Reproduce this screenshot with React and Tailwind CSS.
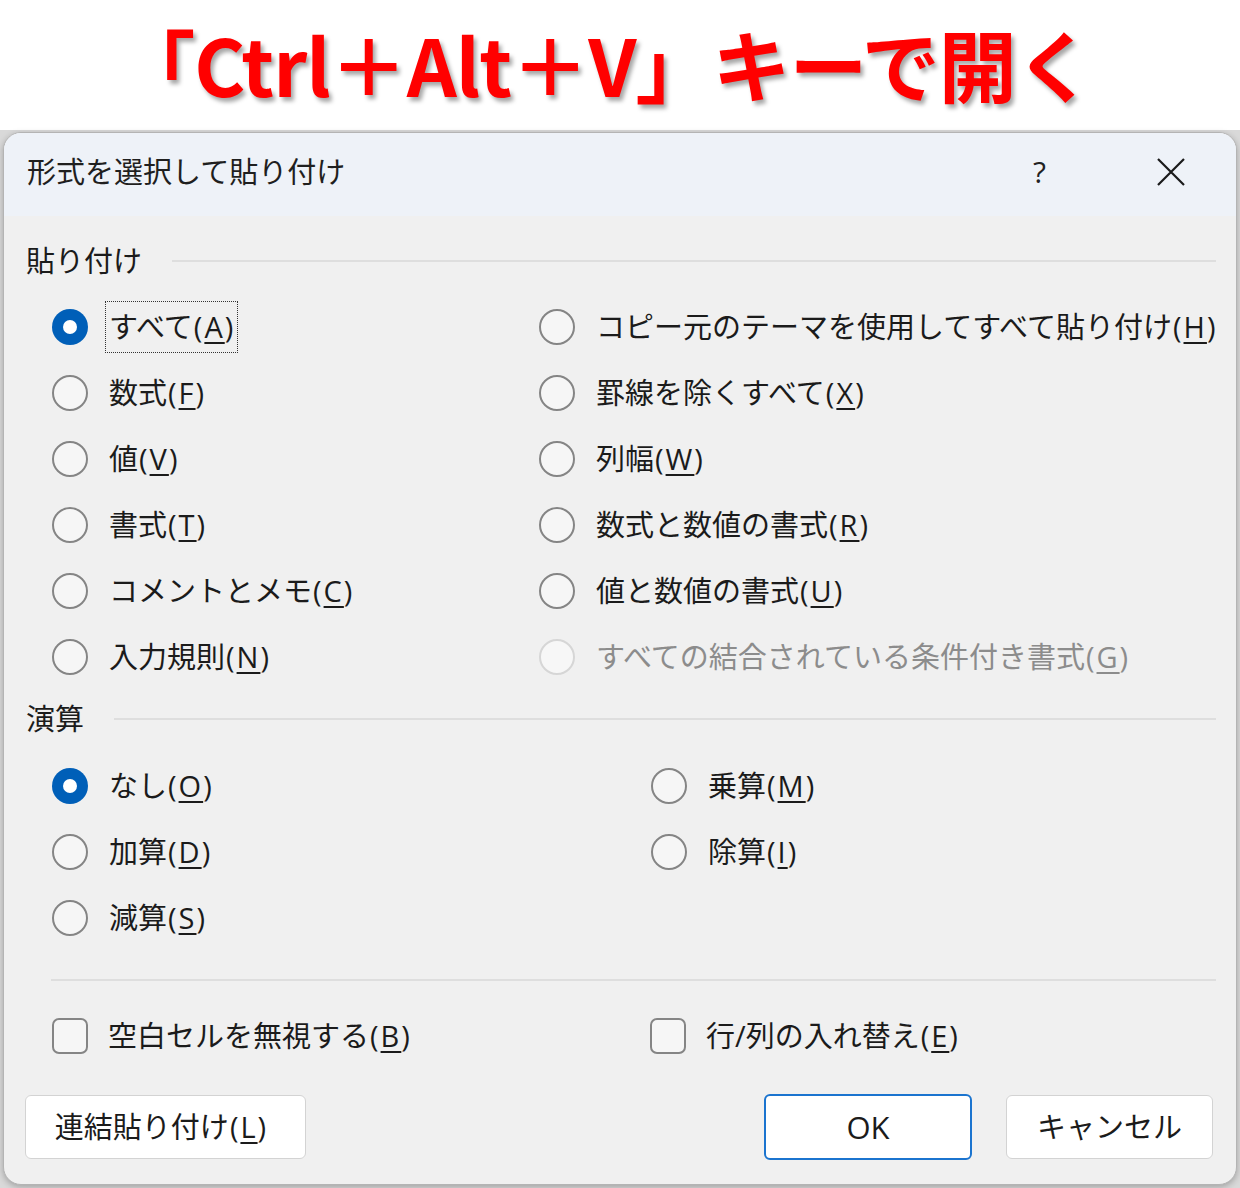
import React from 'react';

const font = { fontFamily: '"Noto Sans CJK JP", "Noto Sans", sans-serif' };
const uiFont = { fontFamily: '"Open Sans", "Noto Sans CJK JP", sans-serif' };

function Radio({ checked, disabled }) {
  if (checked) {
    return (
      <span className="w-[36px] h-[36px] rounded-full bg-[#005fb8] flex items-center justify-center shrink-0">
        <span className="w-[14px] h-[14px] rounded-full bg-white" />
      </span>
    );
  }
  return (
    <span
      className={`w-[36px] h-[36px] rounded-full border-2 shrink-0 ${
        disabled ? 'border-[#d6d6d6] bg-[#f7f7f7]' : 'border-[#858585] bg-[#f6f6f6]'
      }`}
    />
  );
}

function Key({ k }) {
  return (
    <span className="ml-[1px] tracking-[2px]">
      (<u className="underline-offset-[4px] decoration-[1.5px]">{k}</u>)
    </span>
  );
}

function Label({ text, keyChar, disabled }) {
  return (
    <span className={disabled ? 'text-[#8c8c8c]' : 'text-[#1b1b1b]'}>
      {text}
      <Key k={keyChar} />
    </span>
  );
}

function RadioRow({ text, keyChar, checked, disabled, focus }) {
  return (
    <div className="h-[66px] flex items-center">
      <Radio checked={checked} disabled={disabled} />
      {focus ? (
        <span className="ml-[17px] pl-[3px] pr-[2px] py-[3px] border border-dotted border-[#333] leading-[44px]">
          <Label text={text} keyChar={keyChar} disabled={disabled} />
        </span>
      ) : (
        <span className="ml-[21px]">
          <Label text={text} keyChar={keyChar} disabled={disabled} />
        </span>
      )}
    </div>
  );
}

function Section({ title, lineStart }) {
  return (
    <div className="h-[50px] flex items-center pl-[22px] pr-[20px]">
      <span className="text-[29px] text-[#1b1b1b]">{title}</span>
      <span className={`flex-1 h-[2px] bg-[#dedede] ${lineStart}`} />
    </div>
  );
}

function Check({ text, keyChar }) {
  return (
    <div className="h-[66px] flex items-center">
      <span className="w-[36px] h-[36px] rounded-[7px] border-2 border-[#858585] bg-[#f6f6f6] shrink-0" />
      <span className="ml-[20px]">
        <Label text={text} keyChar={keyChar} />
      </span>
    </div>
  );
}

export default function App() {
  const pasteLeft = [
    ['すべて', 'A', true, false, true],
    ['数式', 'F'],
    ['値', 'V'],
    ['書式', 'T'],
    ['コメントとメモ', 'C'],
    ['入力規則', 'N'],
  ];
  const pasteRight = [
    ['コピー元のテーマを使用してすべて貼り付け', 'H'],
    ['罫線を除くすべて', 'X'],
    ['列幅', 'W'],
    ['数式と数値の書式', 'R'],
    ['値と数値の書式', 'U'],
    ['すべての結合されている条件付き書式', 'G', false, true],
  ];

  return (
    <div className="w-[1240px] h-[1188px] overflow-hidden bg-white" style={font}>
      {/* 見出し */}
      <div className="h-[130px] flex items-center justify-center pb-[4px] pr-[30px]">
        <h1
          className="text-[78px] font-bold text-[#ff0000] tracking-[-1px] leading-none"
          style={{ textShadow: '3px 4px 4px rgba(0,0,0,0.35)' }}
        >
          「Ctrl＋Alt＋V」キーで開く
        </h1>
      </div>

      {/* ダイアログ */}
      <div className="h-[1058px] bg-[#d9d9d9] pt-[2px] px-[3px]">
        <div
          className="h-[1053px] rounded-[18px] border border-[#b4b4b4] bg-[#f0f0f0] overflow-hidden shadow-[0_2px_6px_rgba(0,0,0,0.25)] text-[29px] text-[#1b1b1b]"
          style={uiFont}
        >
          <div className="h-[83px] bg-[#eef2f8] flex items-center pl-[23px] pr-[50px] pb-[6px]">
            <span className="text-[29px] text-[#1f1f1f]">形式を選択して貼り付け</span>
            <span className="ml-auto text-[30px] text-[#222] mr-[110px]">?</span>
            <svg width="30" height="30" viewBox="0 0 30 30">
              <path d="M2 2 L28 28 M28 2 L2 28" stroke="#1a1a1a" strokeWidth="2.2" />
            </svg>
          </div>

          <div className="pt-[20px]">
            <Section title="貼り付け" lineStart="ml-[30px]" />
            <div className="mt-[8px] pl-[48px] flex">
              <div className="w-[487px]">
                {pasteLeft.map(([t, k, c, d, f]) => (
                  <RadioRow key={t} text={t} keyChar={k} checked={c} disabled={d} focus={f} />
                ))}
              </div>
              <div>
                {pasteRight.map(([t, k, c, d]) => (
                  <RadioRow key={t} text={t} keyChar={k} checked={c} disabled={d} />
                ))}
              </div>
            </div>

            <div className="mt-[4px]">
              <Section title="演算" lineStart="ml-[30px]" />
            </div>
            <div className="mt-[9px] pl-[48px] flex">
              <div className="w-[599px]">
                <RadioRow text="なし" keyChar="O" checked />
                <RadioRow text="加算" keyChar="D" />
                <RadioRow text="減算" keyChar="S" />
              </div>
              <div>
                <RadioRow text="乗算" keyChar="M" />
                <RadioRow text="除算" keyChar="I" />
              </div>
            </div>

            <div className="mt-[28px] ml-[47px] mr-[20px] h-[2px] bg-[#dedede]" />

            <div className="mt-[22px] pl-[48px] flex">
              <div className="w-[598px]">
                <Check text="空白セルを無視する" keyChar="B" />
              </div>
              <Check text="行/列の入れ替え" keyChar="E" />
            </div>

            <div className="mt-[25px] pl-[21px] pr-[23px] flex items-center">
              <button className="w-[281px] h-[64px] rounded-[6px] bg-white border border-[#d3d3d3] text-[29px] text-[#1b1b1b] pr-[8px]">
                連結貼り付け<Key k="L" />
              </button>
              <button className="ml-auto w-[208px] h-[66px] rounded-[6px] bg-white border-2 border-[#1b74cf] text-[31px] text-[#1b1b1b]">
                OK
              </button>
              <button className="ml-[34px] w-[207px] h-[64px] rounded-[6px] bg-white border border-[#d3d3d3] text-[29px] text-[#1b1b1b]">
                キャンセル
              </button>
            </div>
          </div>
        </div>
      </div>
    </div>
  );
}
